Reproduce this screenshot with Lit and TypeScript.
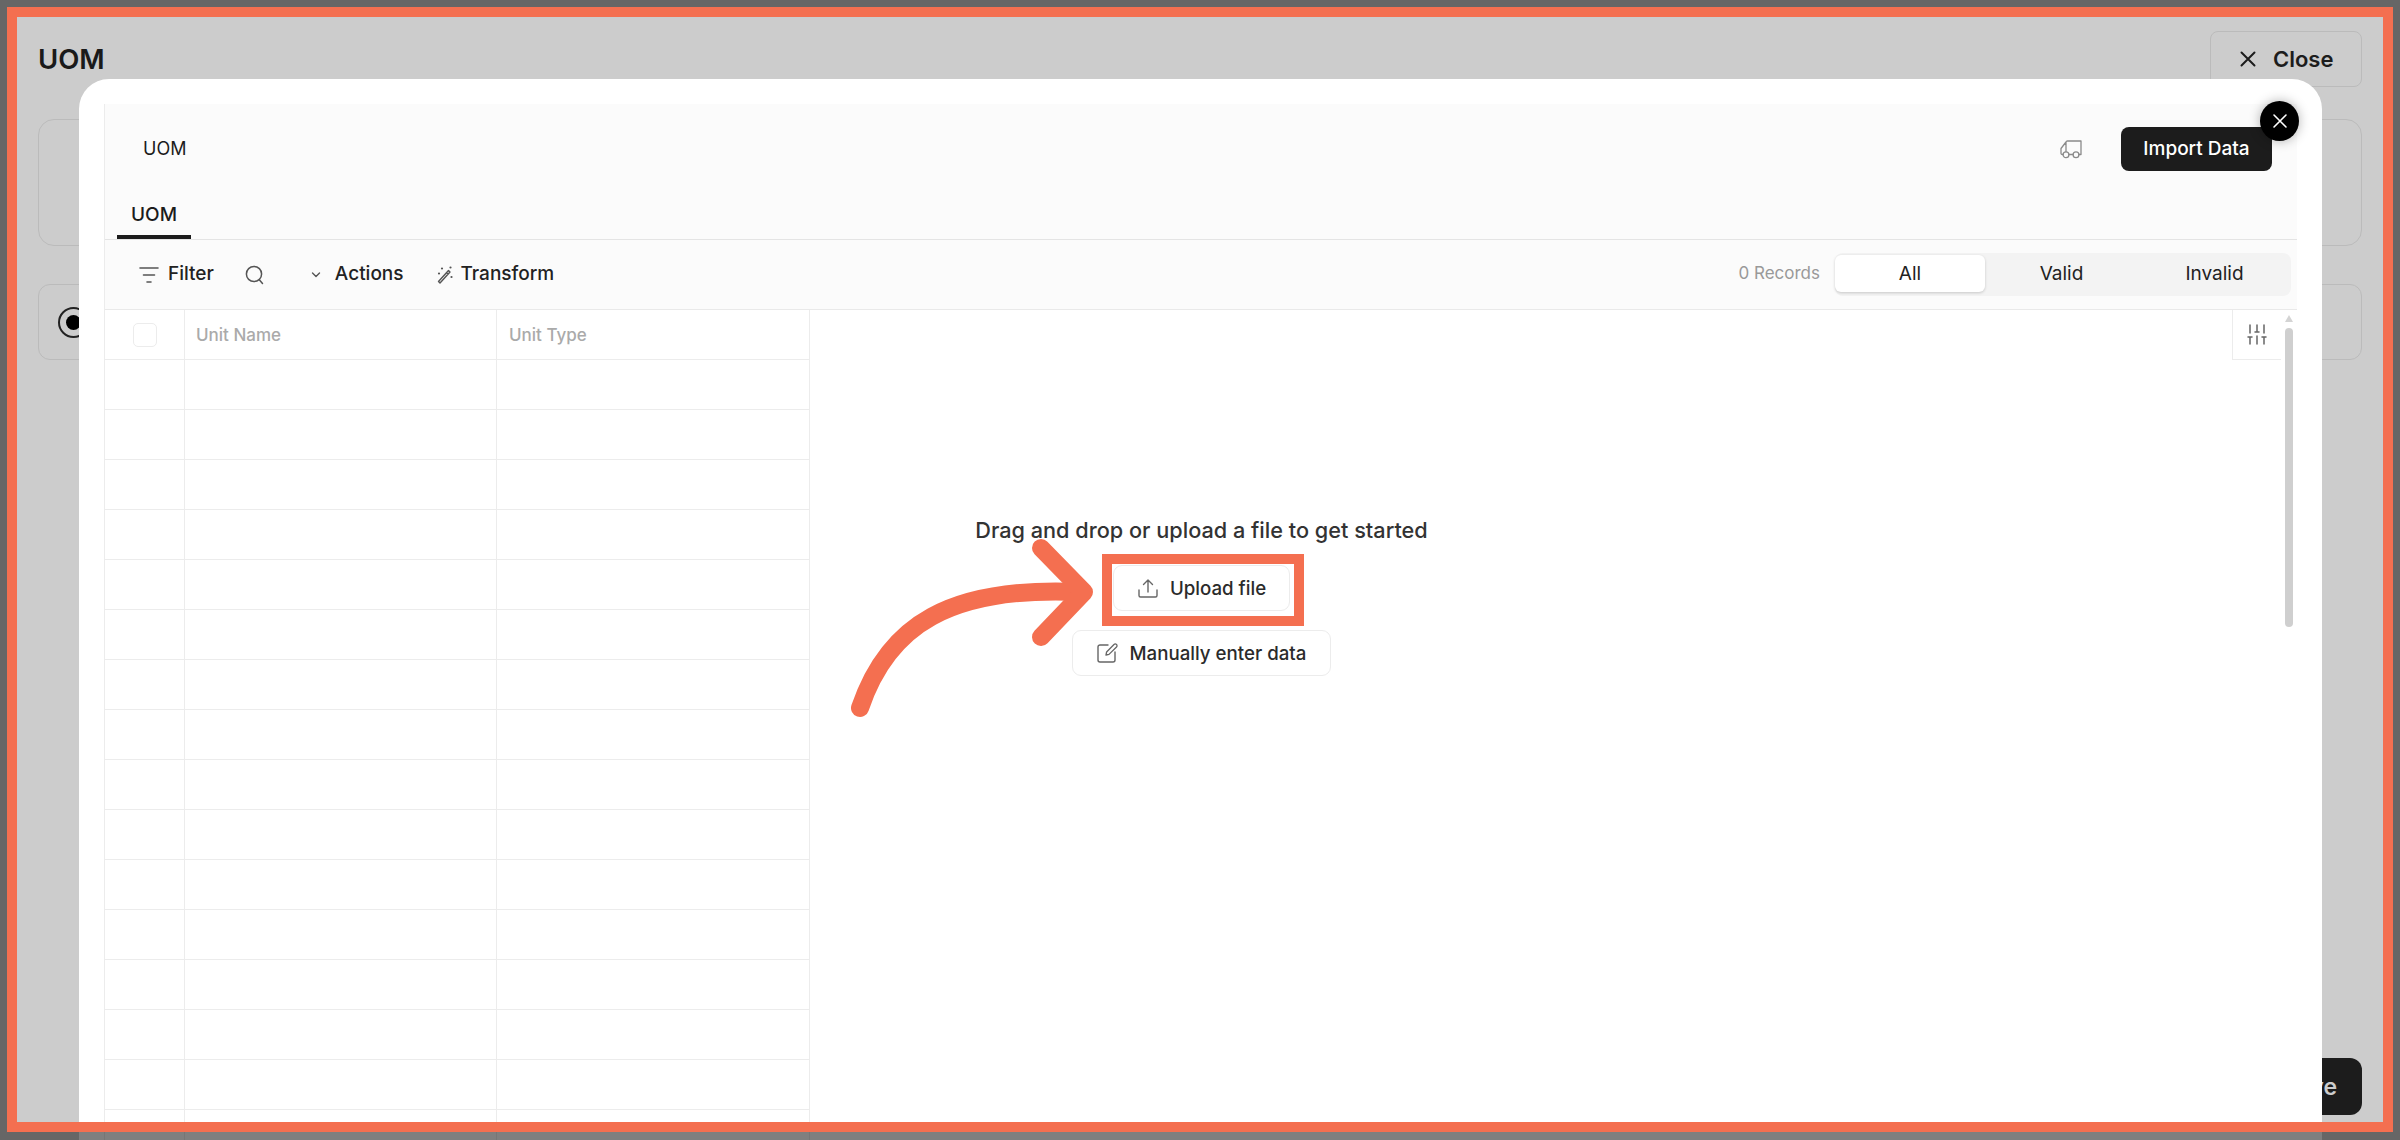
import { LitElement, html, css, svg } from "lit";
import { customElement } from "lit/decorators.js";

const ic = (w: number, h: number, vb: string, body: unknown, cls = "") =>
  html`<svg class=${cls} width=${w} height=${h} viewBox=${vb} fill="none" stroke="currentColor" stroke-linecap="round" stroke-linejoin="round">${body}</svg>`;

@customElement("app-root")
export class AppRoot extends LitElement {
  static styles = css`
    :host { display: block; width: 2400px; height: 1140px; position: relative; overflow: hidden; font-family: Inter, "Liberation Sans", sans-serif; color: #1c1c1c; }
    svg { display: block; flex: none; }
    .page { height: 1140px; box-sizing: border-box; background: #ccc; padding: 31px 38px 25px; display: flex; flex-direction: column; }
    .page-head { display: flex; justify-content: space-between; align-items: center; height: 56px; }
    .title { font-size: 27.500px; font-weight: 600; color: #1a1a1a; }
    .close { width: 152px; height: 56px; box-sizing: border-box; border: 1px solid #bbb; border-radius: 8px; display: flex; align-items: center; gap: 17px; padding-left: 29px; font-size: 22px; font-weight: 600; }
    .card1 { height: 127px; margin-top: 32px; border: 1px solid #bbb; border-radius: 16px; box-sizing: border-box; }
    .card2 { height: 76px; margin-top: 38px; border: 1px solid #bbb; border-radius: 12px; box-sizing: border-box; display: flex; align-items: center; padding-left: 19px; }
    .radio { width: 31px; height: 31px; box-sizing: border-box; border: 2px solid #222; border-radius: 50%; display: flex; align-items: center; justify-content: center; }
    .radio i { width: 15px; height: 15px; border-radius: 50%; background: #000; display: block; }
    .page-foot { margin-top: auto; display: flex; justify-content: flex-end; }
    .save { height: 57px; padding: 0 25px; border-radius: 12px; background: #1c1c1c; color: #ccc; font-size: 23px; font-weight: 600; display: flex; align-items: center; }

    .modal { position: absolute; left: 79px; top: 79px; width: 2243px; height: 1100px; box-sizing: border-box; background: #fff; border-radius: 30px; padding: 25px 25px 0; display: flex; }
    .x-round { position: absolute; left: 2181px; top: 22px; width: 39px; height: 40px; border-radius: 50%; background: #000; color: #fff; display: flex; align-items: center; justify-content: center; box-shadow: 0 0 12px rgba(0,0,0,.3); }
    .panel { flex: 1; border-left: 1px solid #ececec; display: flex; flex-direction: column; overflow: hidden; }
    .top { background: #fbfbfb; }
    .head { height: 88px; display: flex; align-items: center; padding: 0 25px 0 38px; font-size: 18px; font-weight: 400; }
    .truck { margin-left: auto; margin-right: 39px; color: #8a8a8a; margin-top: 2px; }
    .import { width: 151px; height: 44px; border-radius: 8px; background: #1c1c1c; color: #fff; font-size: 19px; font-weight: 500; display: flex; align-items: center; justify-content: center; margin-top: 1px; }
    .tabs { height: 48px; box-sizing: border-box; border-bottom: 1px solid #e4e4e4; padding-left: 12px; display: flex; }
    .tab { width: 74px; height: 47px; box-sizing: border-box; border-bottom: 4px solid #1c1c1c; display: flex; align-items: center; justify-content: center; font-size: 19px; font-weight: 500; padding-top: 1px; }
    .toolbar { height: 70px; box-sizing: border-box; border-bottom: 1px solid #e9e9e9; display: flex; align-items: center; padding: 0 6px 0 34px; font-size: 19px; font-weight: 500; color: #222; }
    .ico { color: #555; }
    .filter-t { margin-left: 9px; margin-top: -2px; }
    .search { margin-left: 31px; }
    .chev { margin-left: 47px; }
    .actions { margin-left: 14px; margin-top: -2px; }
    .wand { margin-left: 33px; }
    .transform { margin-left: 8px; margin-top: -2px; }
    .records { margin-left: auto; margin-right: 15px; font-size: 17px; font-weight: 400; color: #999; margin-top: -3px; }
    .seg { width: 456px; height: 43px; box-sizing: border-box; padding: 2px 0 4px; border-radius: 8px; background: #f3f3f3; display: grid; grid-template-columns: 150px 1fr 1fr; align-items: stretch; font-size: 19px; font-weight: 400; text-align: center; color: #222; }
    .seg span { display: flex; align-items: center; justify-content: center; }
    .seg .on { background: #fff; border-radius: 6px; box-shadow: 0 1px 3px rgba(0,0,0,.18); }
    .content { flex: 1; display: flex; min-height: 0; background: #fff; }
    .table { width: 705px; border-right: 1px solid #ececec; box-sizing: border-box; flex: none; }
    .row { height: 50px; box-sizing: border-box; border-bottom: 1px solid #ececec; display: grid; grid-template-columns: 80px 312px 1fr; }
    .row > div { border-right: 1px solid #ececec; display: flex; align-items: center; }
    .row > div:last-child { border-right: 0; }
    .hd { font-size: 17px; font-weight: 500; color: #aaa; padding-left: 11px; }
    .hd.second { padding-left: 12px; }
    .checkcell { justify-content: center; }
    .check { width: 24px; height: 24px; box-sizing: border-box; border: 1px solid #ececec; border-radius: 5px; }
    .empty { width: 783px; flex: none; box-sizing: border-box; padding-top: 205px; display: flex; flex-direction: column; align-items: center; }
    .drag { font-size: 21.700px; font-weight: 500; line-height: 30px; color: #333; }
    .btn { height: 46px; box-sizing: border-box; border: 1px solid #ececec; border-radius: 9px; background: #fff; display: flex; align-items: center; justify-content: center; font-size: 18.700px; font-weight: 500; color: #2b2b2b; }
    .upload { width: 177px; margin-top: 20px; gap: 12px; }
    .upload svg { margin-left: 1px; }
    .manual { width: 259px; margin-top: 19px; gap: 12px; }
    .btn svg { color: #666; }
    .side { margin-left: auto; display: flex; gap: 4px; padding-right: 4px; }
    .tune { width: 49px; height: 50px; box-sizing: border-box; border: 1px solid #ececec; border-width: 0 0 1px 1px; display: flex; align-items: center; justify-content: center; color: #666; }
    .scroll { width: 8px; padding-top: 5px; display: flex; flex-direction: column; align-items: center; }
    .scroll .up { width: 0; height: 0; border: 4px solid transparent; border-top: 0; border-bottom: 7px solid #d4d4d4; }
    .scroll .thumb { width: 8px; height: 299px; margin-top: 6px; border-radius: 4px; background: #cfcfcf; }

    .notes { position: absolute; inset: 0; pointer-events: none; }
    .arrow { position: absolute; left: 0; top: 0; }
    .box { position: absolute; left: 1102px; top: 554px; width: 202px; height: 72px; box-sizing: border-box; border: 10px solid #f46f50; }
    .frame { position: absolute; left: 7px; top: 7px; width: 2386px; height: 1125px; box-sizing: border-box; border: 10px solid #f46f50; box-shadow: 0 0 0 60px rgba(0,0,0,.5); }
  `;

  render() {
    const rows = Array.from({ length: 16 });
    return html`
      <div class="page">
        <div class="page-head">
          <div class="title">UOM</div>
          <div class="close">${ic(16, 16, "0 0 16 16", svg`<path d="M1.500 1.500l13 13M14.500 1.500l-13 13" stroke-width="2"/>`)}<span>Close</span></div>
        </div>
        <div class="card1"></div>
        <div class="card2"><div class="radio"><i></i></div></div>
        <div class="page-foot"><div class="save">Save</div></div>
      </div>

      <div class="modal">
        <div class="panel">
          <div class="top">
            <div class="head">
              <span>UOM</span>
              <span class="truck">${ic(22, 19, "0 0 22 19", svg`<path d="M6 11.500V2.500C6 1.500 6.600 1 7.500 1H21v13.500h-2M13 14.500H9M3 14.500H2.200c-.7 0-1.200-.5-1.200-1.200V8.500L6 2" stroke-width="1.300"/><circle cx="6" cy="14.800" r="2.900" stroke-width="1.300"/><circle cx="16" cy="14.800" r="2.900" stroke-width="1.300"/>`)}</span>
              <div class="import">Import Data</div>
            </div>
            <div class="tabs"><div class="tab">UOM</div></div>
            <div class="toolbar">
              ${ic(20, 18, "0 0 20 18", svg`<path d="M1 2h18M4.500 9h11M8 16h4" stroke-width="1.600"/>`, "ico")}
              <span class="filter-t">Filter</span>
              ${ic(19, 20, "0 0 19 20", svg`<circle cx="9" cy="9" r="7.600" stroke-width="1.500"/><path d="M14.500 15l3 3.500" stroke-width="1.500"/>`, "ico search")}
              ${ic(10, 8, "0 0 10 8", svg`<path d="M1.500 2l3.500 3.500L8.500 2" stroke-width="1.400"/>`, "ico chev")}
              <span class="actions">Actions</span>
              ${ic(16, 18, "0 0 16 18", svg`<path d="M1.500 15.500l1.500 1.500L13 6l-1.500-1.500zM9.500 6.500L11 8" stroke-width="1.400"/><path d="M5 2.500h.01M13.500 1.500h.01M14.500 11h.01M2 7.500h.01" stroke-width="2.200"/>`, "ico wand")}
              <span class="transform">Transform</span>
              <span class="records">0 Records</span>
              <div class="seg"><span class="on">All</span><span>Valid</span><span>Invalid</span></div>
            </div>
          </div>
          <div class="content">
            <div class="table">
              <div class="row">
                <div class="checkcell"><div class="check"></div></div>
                <div class="hd">Unit Name</div>
                <div class="hd second">Unit Type</div>
              </div>
              ${rows.map(() => html`<div class="row"><div></div><div></div><div></div></div>`)}
            </div>
            <div class="empty">
              <div class="drag">Drag and drop or upload a file to get started</div>
              <div class="btn upload">
                ${ic(20, 20, "0 0 20 20", svg`<path d="M10 14V2M5.500 6.500L10 2l4.500 4.500M1 12v5.500c0 .8.600 1.500 1.500 1.500h15c.9 0 1.500-.7 1.500-1.500V12" stroke-width="1.400"/>`)}
                <span>Upload file</span>
              </div>
              <div class="btn manual">
                ${ic(21, 20, "0 0 21 20", svg`<path d="M11 2H3C1.900 2 1 2.900 1 4v13c0 1.100.9 2 2 2h13c1.100 0 2-.9 2-2V9" stroke-width="1.400"/><path d="M9 12l.6-3L17 1.500a1.500 1.500 0 0 1 2.500 2.500L12 11.400z" stroke-width="1.300"/>`)}
                <span>Manually enter data</span>
              </div>
            </div>
            <div class="side">
              <div class="tune">${ic(20, 21, "0 0 20 21", svg`<path d="M3 1v8M1 13h4M3 13v7M10 1v7M8 8h4M10 12v8M17 1v8M15 13h4M17 13v7" stroke-width="1.500"/>`)}</div>
              <div class="scroll"><div class="up"></div><div class="thumb"></div></div>
            </div>
          </div>
        </div>
        <div class="x-round">${ic(16, 16, "0 0 16 16", svg`<path d="M2 2l12 12M14 2L2 14" stroke-width="1.600"/>`)}</div>
      </div>

      <div class="notes">
        <div class="box"></div>
        <svg class="arrow" width="2400" height="1140" viewBox="0 0 2400 1140" fill="none" stroke="#f46f50" stroke-linecap="round" stroke-linejoin="round">
          <path d="M860 708C888 625 950 586 1080 592" stroke-width="18"/>
          <path d="M1041 548L1084 592L1041 637" stroke-width="18"/>
        </svg>
        <div class="frame"></div>
      </div>
    `;
  }
}
